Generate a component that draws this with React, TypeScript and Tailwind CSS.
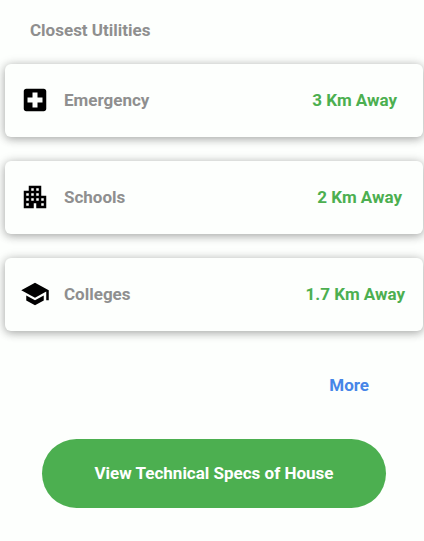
import type { IconType } from "react-icons";
import { MdApartment, MdLocalHospital, MdSchool } from "react-icons/md";

type Utility = { name: string; distance: string; Icon: IconType; inset: string };

const utilities: Utility[] = [
  { name: "Emergency", distance: "3 Km Away", Icon: MdLocalHospital, inset: "pr-[26px]" },
  { name: "Schools", distance: "2 Km Away", Icon: MdApartment, inset: "pr-[21px]" },
  { name: "Colleges", distance: "1.7 Km Away", Icon: MdSchool, inset: "pr-[18px]" },
];

function UtilityCard({ name, distance, Icon, inset }: Utility) {
  return (
    <li
      className={`flex h-[73px] items-center rounded-md bg-[#fdfffd] pb-px pl-[15px] shadow-[0_2px_8px_rgba(0,0,0,0.24),0_1px_12px_rgba(0,0,0,0.16)] ${inset}`}
    >
      <Icon className="size-[30px] shrink-0 text-black" aria-hidden="true" />
      <span className="ml-[14px] text-[#8f8f8f]">{name}</span>
      <span className="ml-auto text-[#4caf50]">{distance}</span>
    </li>
  );
}

export default function App() {
  return (
    <main className="min-h-screen bg-[#fdfffd] pt-5 pb-8 font-['Roboto',sans-serif] text-[17px] leading-5 font-bold">
      <h2 className="ml-[30px] text-[#8f8f8f]">Closest Utilities</h2>
      <ul className="mt-6 mr-px ml-[5px] flex flex-col gap-6">
        {utilities.map((utility) => (
          <UtilityCard key={utility.name} {...utility} />
        ))}
      </ul>
      <div className="mt-11 flex justify-end pr-[55px]">
        <a href="#more" className="text-[#4686e8]">
          More
        </a>
      </div>
      <div className="mt-11 mr-[38px] ml-[42px]">
        <button type="button" className="h-[69px] w-full rounded-full bg-[#4caf50] pb-px text-white">
          View Technical Specs of House
        </button>
      </div>
    </main>
  );
}
